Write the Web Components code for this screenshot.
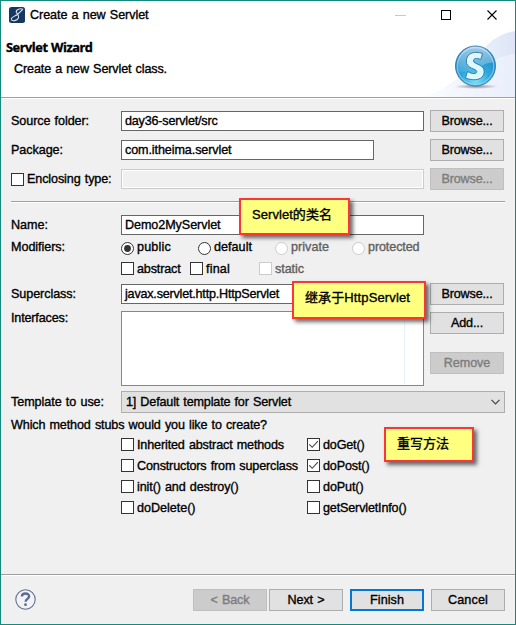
<!DOCTYPE html>
<html lang="en"><head><meta charset="utf-8"><title>Create a new Servlet</title>
<style>
html,body{margin:0}
body{width:516px;height:625px;overflow:hidden;font:12.6px/16px "Liberation Sans","Noto Sans CJK SC",sans-serif;word-spacing:.8px;color:#000;background:#f0f0f0}
</style></head><body>
<servlet-wizard></servlet-wizard>
<script>
const define=(name,css,html,after)=>customElements.define(name,class extends HTMLElement{
  connectedCallback(){
    if(this.shadowRoot)return;
    const r=this.attachShadow({mode:'open'});
    r.innerHTML='<style>*{box-sizing:border-box}'+css+'</style>'+(typeof html==='function'?html(this):html);
    if(after)after(this,r);
  }
});

// Single-line text whose tracking is adjusted to fill the width in "w".
define('fit-text',
 ':host{display:inline-block;white-space:pre;flex:none;height:16px;line-height:16px}span{display:inline-block;-webkit-text-stroke:.35px currentColor}',
 '<span><slot></slot></span>',
 (el,r)=>{
   const w=parseFloat(el.getAttribute('w')),s=r.querySelector('span'),n=el.textContent.length;
   const d=(w-s.getBoundingClientRect().width)/n;
   s.style.letterSpacing=d.toFixed(3)+'px';
   el.style.width=w+'px';
 });

define('ui-field',
 ':host{display:flex;box-sizing:border-box;flex:none;height:20px;align-items:center;border:1px solid #666;background:#fff;padding-left:3px}:host([disabled]){border-color:#ccc;background:#f0f0f0;box-shadow:inset 0 0 0 1px #fff}',
 '<slot></slot>');

define('ui-button',
 ':host{display:flex;box-sizing:border-box;flex:none;width:74px;height:22px;align-items:center;justify-content:center;border:1px solid #adadad;background:#e1e1e1;padding-bottom:1px}:host([disabled]){border-color:#bfbfbf;background:#ccc;color:#7c7c7c}:host([primary]){border:2px solid #0078d7}',
 '<slot></slot>');

define('ui-check',
 ':host{display:flex;align-items:center;gap:3px;height:13px}:host([disabled]){color:#606060}i{width:13px;height:13px;flex:none;border:1px solid #333;background:#fff}:host([disabled]) i{border-color:#ccc}:host([radio]) i{border-radius:50%}svg{display:block}',
 el=>'<i>'+(el.hasAttribute('checked')?(el.hasAttribute('radio')?
  '<svg width="11" height="11"><circle cx="5.5" cy="5.5" r="3.4" fill="#333"/></svg>':
  '<svg width="11" height="11"><path d="M1.3 5.3L4.2 8.3L9.9 2.2" fill="none" stroke="#444" stroke-width="1.1"/></svg>'):'')+'</i><slot></slot>');

define('ui-note',
 ':host{position:absolute;box-sizing:border-box;border:2px solid #ff3434;background:#ffff80;box-shadow:3px 3px 4px rgba(0,0,0,.58);z-index:2;font-size:13px}',
 '<slot></slot>');

define('title-bar',
 ':host{display:flex;height:28px;align-items:center;padding-left:8px}.name{margin-left:5px;display:flex}.controls{margin-left:auto;display:block}',
 `<svg width="16" height="16"><rect width="16" height="16" rx="2.5" fill="#173761"/><path d="M14 2.2C10.5 1 6.5 3 7.4 5.5C8.2 7.4 10.7 8.6 9.4 11C8 13.8 3 14.8 2.3 12.4C1.8 10.4 6 9.3 8.6 7.2C11 5.3 12.3 3.9 14 2.2" fill="none" stroke="#dbe4ee" stroke-width="1.1"/></svg>
 <div class="name"><slot></slot></div>
 <svg class="controls" width="124" height="28"><path d="M4 14.5H15" stroke="#c8c8c8"/><rect x="50.5" y="9.5" width="9" height="9" fill="none" stroke="#000"/><path d="M96.5 9.5L105.5 18.5M105.5 9.5L96.5 18.5" stroke="#000" stroke-width="1.1"/></svg>`);

define('wizard-banner',
 ':host{display:flex;height:69px;justify-content:space-between;overflow:hidden;border-bottom:1px solid #a0a0a0;box-sizing:border-box}.t{padding:10px 0 0 5px}.sub{padding:5px 0 0 8px}::slotted([slot=heading]){font:700 12.8px/16px "Open Sans","Noto Sans",sans-serif}svg{display:block}',
 `<div class="t"><slot name="heading"></slot><div class="sub"><slot></slot></div></div>
 <svg width="96" height="69" viewBox="0 0 96 69">
 <defs>
 <linearGradient id="w" x1="0" x2="1"><stop offset="0" stop-color="#fff"/><stop offset=".55" stop-color="#eef2fc"/><stop offset="1" stop-color="#dde5f7"/></linearGradient>
 <linearGradient id="w2" x1="0" x2="1"><stop offset="0" stop-color="#fff" stop-opacity="0"/><stop offset="1" stop-color="#e9effb"/></linearGradient>
 <radialGradient id="b" cx=".5" cy=".85" r=".85"><stop offset="0" stop-color="#7fe0fa"/><stop offset=".4" stop-color="#30a8dd"/><stop offset="1" stop-color="#1e7cbd"/></radialGradient>
 <linearGradient id="g" x1="0" y1="0" x2="0" y2="1"><stop offset="0" stop-color="#fff" stop-opacity=".6"/><stop offset="1" stop-color="#fff" stop-opacity=".08"/></linearGradient>
 <linearGradient id="s" x1="0" y1="0" x2="0" y2="1"><stop offset="0" stop-color="#e2f5ff"/><stop offset="1" stop-color="#d9fbff"/></linearGradient>
 <radialGradient id="sh"><stop offset="0" stop-color="#756c70" stop-opacity=".75"/><stop offset="1" stop-color="#756c70" stop-opacity="0"/></radialGradient>
 </defs>
 <path d="M0 69C28 64 50 40 64 20C74 9 84 4 96 2V69Z" fill="url(#w)"/>
 <path d="M22 69C50 64 62 28 96 25V69Z" fill="url(#w2)"/>
 <ellipse cx="57" cy="57.5" rx="22" ry="2.5" fill="url(#sh)"/>
 <circle cx="56.5" cy="37" r="20" fill="url(#b)" stroke="#3c80b7"/>
 <circle cx="56.5" cy="37" r="18.3" fill="none" stroke="#9bdcf5" stroke-opacity=".65" stroke-width="1.2"/>
 <path d="M38.5 37.5A18 18 0 0 1 74.5 33.5C64 32.5 53 45.5 39 42.5Z" fill="url(#g)"/>
 <path d="M63.5 24.5L61.8 30.5C57 28.5 54.4 29.5 54.5 32C54.7 35.5 65.5 35 65.2 42.8C64.8 51 55.5 52.5 46.5 49L48.5 42.5C53.5 45.4 57.6 45 57.8 42.7C58 39.5 47.2 40 47.3 32C47.5 23.5 56.5 21.8 63.5 24.5Z" fill="url(#s)" stroke="#2874a5" stroke-width=".9"/>
 </svg>`);

define('help-icon',':host{display:block;width:21px;height:21px}svg{display:block}',
 '<svg width="21" height="21"><circle cx="10.5" cy="10.5" r="9.7" fill="#f3f3f6" stroke="#60718f" stroke-width="1.1"/><path d="M6.9 7.5C7 3.5 14.3 3.5 14.1 7.4C14 9.9 10.7 9.9 10.6 12.8" fill="none" stroke="#596b91" stroke-width="2.3"/><circle cx="10.5" cy="15.7" r="1.4" fill="#596b91"/></svg>');

define('servlet-wizard',`
:host{display:flex;flex-direction:column;position:relative;box-sizing:border-box;width:516px;height:625px;border:1px solid #138a7b;background:#f0f0f0}
.top{background:#fff;height:98px;flex:none}
main{flex:1;padding:12px 10px 0}
.row{display:grid;grid-template-columns:110px 303px 74px;column-gap:0;align-items:center;height:22px;margin-bottom:7px}
.row>ui-button{margin-left:6px}
.sep{height:2px;border-top:1px solid #a0a0a0;background:#fff;width:494px;margin-top:11px}
.opt{display:grid;align-items:center;height:13px}
.list{width:303px;height:75px;border:1px solid #828790;background:#fff;padding-right:18px}
.list div{height:72px;border-right:1px solid #e5f1fb}
.area{display:grid;grid-template-columns:110px 303px 80px;align-items:start;height:75px;margin-top:6px}
.btns{padding:1px 0 0 6px;display:flex;flex-direction:column;gap:18px}
.combo{display:flex;align-items:center;justify-content:space-between;width:384px;height:22px;background:#e1e1e1;border:1px solid #adadad;padding:0 3px 1px 4px}
.stubs{display:grid;grid-template-columns:186px 1fr;row-gap:8px;padding:4px 0 0 110px}
footer{height:50px;flex:none;border-top:1px solid #a0a0a0;box-shadow:inset 0 1px #fff;display:flex;padding:14px 10px 0 14px}
footer help-icon{margin-right:auto}
`,`
<div class="top">
 <title-bar><fit-text w="118.5">Create a new Servlet</fit-text></title-bar>
 <wizard-banner><fit-text slot="heading" w="86.5">Servlet Wizard</fit-text><fit-text w="153">Create a new Servlet class.</fit-text></wizard-banner>
</div>
<main>
 <div class="row" style="margin-top:-1px"><fit-text w="78">Source folder:</fit-text><ui-field><fit-text w="92.5">day36-servlet/src</fit-text></ui-field><ui-button><fit-text w="51">Browse...</fit-text></ui-button></div>
 <div class="row"><fit-text w="52">Package:</fit-text><ui-field style="width:253px"><fit-text w="106.5">com.itheima.servlet</fit-text></ui-field><ui-button><fit-text w="51">Browse...</fit-text></ui-button></div>
 <div class="row" style="margin-bottom:0"><ui-check><fit-text w="84.5">Enclosing type:</fit-text></ui-check><ui-field disabled></ui-field><ui-button disabled><fit-text w="51">Browse...</fit-text></ui-button></div>
 <div class="sep"></div>
 <div class="row" style="height:20px;margin:12px 0 0"><fit-text w="37">Name:</fit-text><ui-field><fit-text w="95.5">Demo2MyServlet</fit-text></ui-field></div>
 <div class="opt" style="grid-template-columns:110px 77px 77px 77px 1fr;margin-top:6px"><fit-text w="54" style="margin-top:-2px">Modifiers:</fit-text><ui-check radio checked><fit-text w="34" style="margin-top:-2px">public</fit-text></ui-check><ui-check radio><fit-text w="38" style="margin-top:-2px">default</fit-text></ui-check><ui-check radio disabled><fit-text w="38" style="margin-top:-2px">private</fit-text></ui-check><ui-check radio disabled><fit-text w="51.5" style="margin-top:-2px">protected</fit-text></ui-check></div>
 <div class="opt" style="grid-template-columns:69px 69px 1fr;padding-left:110px;margin-top:8px"><ui-check><fit-text w="43.5">abstract</fit-text></ui-check><ui-check><fit-text w="24">final</fit-text></ui-check><ui-check disabled><fit-text w="29">static</fit-text></ui-check></div>
 <div class="row" style="margin:8px 0 0"><fit-text w="65">Superclass:</fit-text><ui-field><fit-text w="154">javax.servlet.http.HttpServlet</fit-text></ui-field><ui-button><fit-text w="51">Browse...</fit-text></ui-button></div>
 <div class="area"><fit-text w="57" style="margin-top:-1px">Interfaces:</fit-text><div class="list"><div></div></div><div class="btns"><ui-button><fit-text w="32">Add...</fit-text></ui-button><ui-button disabled><fit-text w="46.5">Remove</fit-text></ui-button></div></div>
 <div class="row" style="margin:5px 0 0"><fit-text w="93">Template to use:</fit-text><div class="combo"><fit-text w="165">1] Default template for Servlet</fit-text><svg width="11" height="8"><path d="M1.5 1.8L5.5 5.8L9.5 1.8" fill="none" stroke="#444" stroke-width="1.2"/></svg></div></div>
 <div style="padding-top:4px;height:21px"><fit-text w="256">Which method stubs would you like to create?</fit-text></div>
 <div class="stubs">
 <ui-check><fit-text w="147">Inherited abstract methods</fit-text></ui-check><ui-check checked><fit-text w="41.5">doGet()</fit-text></ui-check>
 <ui-check><fit-text w="161">Constructors from superclass</fit-text></ui-check><ui-check checked><fit-text w="46.5">doPost()</fit-text></ui-check>
 <ui-check><fit-text w="101.5">init() and destroy()</fit-text></ui-check><ui-check><fit-text w="40.5">doPut()</fit-text></ui-check>
 <ui-check><fit-text w="58.5">doDelete()</fit-text></ui-check><ui-check><fit-text w="83.5">getServletInfo()</fit-text></ui-check>
 </div>
</main>
<footer><help-icon></help-icon>
 <ui-button disabled><fit-text w="39">&lt; Back</fit-text></ui-button><ui-button style="margin-left:2px"><fit-text w="37">Next &gt;</fit-text></ui-button><ui-button primary style="margin-left:7px"><fit-text w="34">Finish</fit-text></ui-button><ui-button style="margin-left:7px"><fit-text w="40">Cancel</fit-text></ui-button>
</footer>
<ui-note style="left:238px;top:197px;width:111px;height:37px;padding:7px 0 0 11px"><fit-text w="80">Servlet的类名</fit-text></ui-note>
<ui-note style="left:291px;top:280px;width:134px;height:38px;padding:7px 0 0 11px"><fit-text w="105">继承于HttpServlet</fit-text></ui-note>
<ui-note style="left:383px;top:426px;width:90px;height:35px;padding:7px 0 0 11px"><fit-text w="52">重写方法</fit-text></ui-note>
`);
</script></body></html>
